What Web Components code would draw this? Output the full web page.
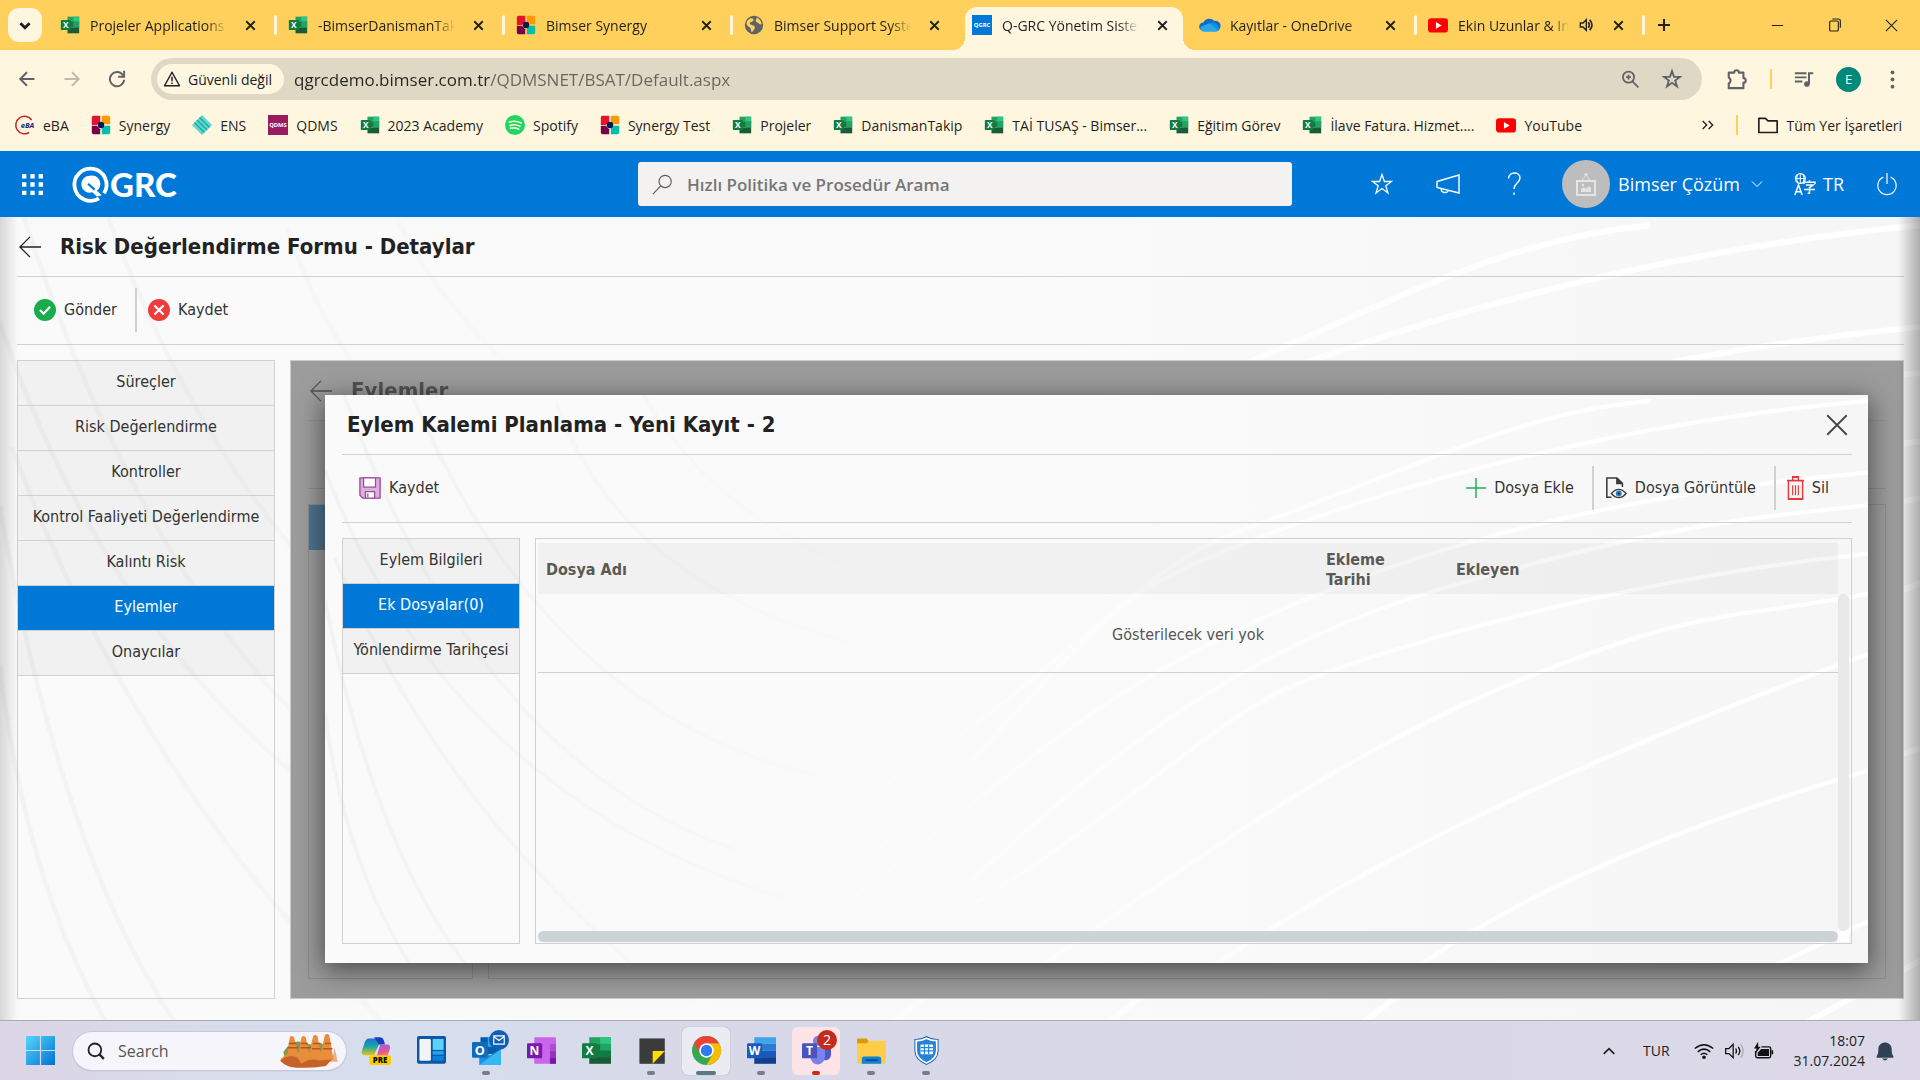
<!DOCTYPE html>
<html lang="tr">
<head>
<meta charset="utf-8">
<title>Q-GRC Yönetim Sistemi</title>
<style>
  html, body { margin: 0; height: 100%; }
  body {
    --ui: "Open Sans", "Noto Sans", sans-serif;
    --app: "DejaVu Sans Condensed", "DejaVu Sans", sans-serif;
    --line: #d0d0d0;
    --blue: #0078d7;
    --swirl: url("data:image/svg+xml,%3Csvg xmlns='http://www.w3.org/2000/svg' viewBox='0 0 1600 680' preserveAspectRatio='none'%3E%3Cdefs%3E%3ClinearGradient id='a'%3E%3Cstop offset='0' stop-color='%23fafafa'/%3E%3Cstop offset='.5' stop-color='%23fafafa'/%3E%3Cstop offset='1' stop-color='%23f6f6f6'/%3E%3C/linearGradient%3E%3ClinearGradient id='b' gradientUnits='userSpaceOnUse' x1='400' x2='1300' y1='0' y2='0'%3E%3Cstop offset='0' stop-color='%23fff' stop-opacity='0'/%3E%3Cstop offset='1' stop-color='%23fff'/%3E%3C/linearGradient%3E%3ClinearGradient id='c' gradientUnits='userSpaceOnUse' x1='0' x2='620' y1='0' y2='0'%3E%3Cstop offset='0' stop-color='%23f3f3f3'/%3E%3Cstop offset='1' stop-color='%23fafafa'/%3E%3C/linearGradient%3E%3C/defs%3E%3Crect width='1600' height='680' fill='url(%23a)'/%3E%3Cg fill='none' stroke='url(%23c)' stroke-width='4'%3E%3Cpath d='M0 245Q50 540 148 685M10 195Q110 470 317 680M0 90Q130 480 476 602M20 0Q160 440 423 543M90 0Q230 380 508 455M240 10Q330 300 740 332M0 380Q20 560 90 685M330 0Q440 220 760 270'/%3E%3C/g%3E%3Cg fill='none' stroke='url(%23b)' stroke-width='5'%3E%3Cpath d='M423 641C650 560 760 240 952 161S1240 20 1375 7M423 543C650 470 780 270 878 215S1260 40 1600 7M529 616C700 480 800 320 1132 196Q1330 120 1600 93M656 597C800 440 950 300 1164 230S1450 150 1600 132M550 685C780 560 900 400 1000 350S1350 220 1600 190M740 685C900 560 1050 430 1238 342S1450 270 1600 238M920 685Q1150 500 1600 310M1132 685Q1300 550 1600 450M1500 685L1600 630'/%3E%3C/g%3E%3C/svg%3E");
  }
</style>
</head>
<body>
<desktop-screen></desktop-screen>
<script>
const excel = `<path d="M9 2h14v7H9z" fill="#21a366"/><path d="M16 2h7v7h-7z" fill="#33c481"/><path d="M9 8h14v7H9z" fill="#107c41"/><path d="M16 8h7v7h-7z" fill="#21a366"/><path d="M9 15h14v7H9z" fill="#185c37"/><rect x="1" y="6" width="12" height="12" rx="1" fill="#107c41"/><text x="7" y="15.5" font-size="10" font-weight="700" fill="#fff" text-anchor="middle" font-family="Open Sans">X</text>`;
const synergy = `<path d="M1 3a2 2 0 0 1 2-2h8v7l-4 4H1z" fill="#e6122b"/><path d="M13 1h8a2 2 0 0 1 2 2v8h-6l-4-3z" fill="#f90"/><path d="M1 13h6l4 4v6H3a2 2 0 0 1-2-2z" fill="#780046"/><path d="M13 16l4-3h6v8a2 2 0 0 1-2 2h-8z" fill="#00bfa8"/><circle cx="12" cy="12" r="4" fill="#0a1850"/>`;
const star = `<path d="M12 2.500l2.400 7h7.100l-5.700 4.300 2.200 7.200-6-4.400-6 4.400 2.200-7.200L2.500 9.500h7.100z" fill="none" stroke="currentColor"`;
const ICONS = {
  excel, synergy,
  down: `<path d="M7 10l5 5 5-5" fill="none" stroke="currentColor" stroke-width="3"/>`,
  x: `<path d="M6 6l12 12M18 6L6 18" stroke="currentColor" stroke-width="2.600"/>`,
  plus: `<path d="M12 3v18M3 12h18" stroke="currentColor" stroke-width="3"/>`,
  globe: `<circle cx="12" cy="12" r="11" fill="#5f6368"/><path d="M8 4c3 0 4 1 3 3s-4 1-4 3 3 2 5 3 1 4-1 6-1 2-2 1 0-4-2-5-4-3-4-5 2-5 5-6zM15 3c3 1 6 4 6 8-2 1-3-1-5-2s-3-3-1-4z" fill="#ffd15c"/>`,
  grc: `<path d="M0 0h24v24H0z" fill="#0078d7"/><text x="12" y="14.500" font-size="7" font-weight="700" fill="#fff" text-anchor="middle" font-family="Open Sans">QGRC</text>`,
  cloud: `<path d="M4 19a5 5 0 0 1 0-10 8 8 0 0 1 13-2 6 6 0 0 1 3 12z" fill="#0f6cc9"/><path d="M4 20a4 4 0 0 1-3-6l10-4 12 6a4 4 0 0 1-3 4z" fill="#28a8ea"/><path d="M12 10a6 6 0 0 1 9 3c3 2 3 5 1 6z" fill="#1490df"/>`,
  yt: `<rect y="4" width="24" height="17" rx="4" fill="#f00"/><path d="M9.500 8.500v8l7-4z" fill="#fff"/>`,
  sound: `<path d="M2 9h4l5-5v16l-5-5H2z" fill="none" stroke="currentColor" stroke-width="2"/><path d="M14 8q3 4 0 8M16 4q7 8 0 16" fill="none" stroke="currentColor" stroke-width="2.400"/>`,
  min: `<path d="M4 12h16" stroke="currentColor" stroke-width="1.500"/>`,
  restore: `<path d="M4 8a2 2 0 0 1 2-2h9a2 2 0 0 1 2 2v11a2 2 0 0 1-2 2H6a2 2 0 0 1-2-2zM8 3h9a3 3 0 0 1 3 3v10" fill="none" stroke="currentColor" stroke-width="1.700"/>`,
  xthin: `<path d="M3 3l18 18M21 3L3 21" stroke="currentColor" stroke-width="1.700"/>`,
  back: `<path d="M22 12H3M12 3l-9 9 9 9" fill="none" stroke="currentColor" stroke-width="2.600"/>`,
  fwd: `<path d="M2 12h19M12 3l9 9-9 9" fill="none" stroke="currentColor" stroke-width="2.600"/>`,
  reload: `<path d="M20 7a9.500 9.500 0 1 0 1.500 6M21.500 1v8h-8" fill="none" stroke="currentColor" stroke-width="2.600"/>`,
  warn: `<path d="M12 3L2 21h20z" fill="none" stroke="currentColor" stroke-width="2" stroke-linejoin="round"/><path d="M12 9v6M12 16.500v2" stroke="currentColor" stroke-width="2"/>`,
  zoomin: `<circle cx="9.500" cy="9" r="7" fill="none" stroke="currentColor" stroke-width="2.200"/><path d="M9.500 6v6M6.500 9h6M14 14l8 8" stroke="currentColor" stroke-width="2.200"/>`,
  star: star + ` stroke-width="2.200"/>`,
  starthin: star + ` stroke-width="1.300"/>`,
  puzzle: `<path d="M3 5h6a2.500 2.500 0 0 1 5 0h5v6a2.500 2.500 0 0 1 0 5v6H3v-5q4-3 0-7z" fill="none" stroke="currentColor" stroke-width="2.300" stroke-linejoin="round"/>`,
  media: `<path d="M1 5h14M1 10h14M1 15h9" stroke="currentColor" stroke-width="2.300"/><path d="M18 18V5h5" fill="none" stroke="currentColor" stroke-width="2.400"/><circle cx="15.500" cy="18" r="3.400" fill="currentColor"/>`,
  dots: `<circle cx="12" cy="3" r="2.400" fill="currentColor"/><circle cx="12" cy="12" r="2.400" fill="currentColor"/><circle cx="12" cy="21" r="2.400" fill="currentColor"/>`,
  eba: `<path d="M20 6A10.500 10.500 0 1 0 17 21" fill="none" stroke="#c8202a" stroke-width="1.800"/><text x="15" y="15.500" font-size="9" font-weight="700" font-style="italic" fill="#1c2a78" text-anchor="middle" font-family="Open Sans">eBA</text>`,
  ens: `<path d="M12 0l12 12-12 12L0 12z" fill="#5fd6cf"/><path d="M9 3l12 12M6 6l12 12M3 9l12 12M12 6l9 9M6 12l9 9" stroke="#17a79d" stroke-width="1.400"/>`,
  qdms: `<path d="M0 0h24v24H0z" fill="#9b1b5f"/><text x="12" y="14.500" font-size="7" font-weight="700" fill="#fff" text-anchor="middle" font-family="Open Sans">QDMS</text>`,
  spotify: `<circle cx="12" cy="12" r="12" fill="#1ed760"/><path d="M5 8.500q8-2.500 14.500 1M6 12.500q6-2 12 1M6.500 16q5-1.500 10 1" fill="none" stroke="#fff6df" stroke-width="2" stroke-linecap="round"/>`,
  more: `<path d="M4 6l6 6-6 6M13 6l6 6-6 6" fill="none" stroke="currentColor" stroke-width="2"/>`,
  folder: `<path d="M1 4h8l3 3h11v14H1z" fill="none" stroke="currentColor" stroke-width="2" stroke-linejoin="round"/>`,
  waffle: `<path d="M0 0h5v5H0zM9.500 0h5v5h-5zM19 0h5v5h-5zM0 9.500h5v5H0zM9.500 9.500h5v5h-5zM19 9.500h5v5h-5zM0 19h5v5H0zM9.500 19h5v5h-5zM19 19h5v5h-5z" fill="#fff"/>`,
  qlogo: `<path d="M18.500 21.500A11 11 0 1 1 22 18" fill="none" stroke="#fff" stroke-width="2.600"/><path d="M12 6a5.800 5.800 0 1 0 2 11.300l3 3 3.500-1-3.500-3A5.800 5.800 0 0 0 12 6z" fill="#fff"/><path d="M11 11.500l4.500 4" stroke="#0078d7" stroke-width="1.500"/>`,
  lens: `<circle cx="15" cy="8.500" r="7" fill="none" stroke="currentColor" stroke-width="1.300"/><path d="M10 13.500L1 23" stroke="currentColor" stroke-width="1.300"/>`,
  horn: `<path d="M1 9.500L23 3v18L1 15.500zM5 16.500c0 5 7 5 7 2" fill="none" stroke="currentColor" stroke-width="1.400"/>`,
  help: `<path d="M6.500 6.500C7-1 18-.5 18 6c0 5-6 5-6 11M12 20.500v2.500" fill="none" stroke="currentColor" stroke-width="1.400"/>`,
  picture: `<path d="M3 9h18v14H3z" fill="none" stroke="#e4e4e4" stroke-width="2"/><path d="M8 8l4-5 4 5" fill="none" stroke="#e4e4e4" stroke-width="1"/><circle cx="12" cy="2.500" r="1.600" fill="#e4e4e4"/><path d="M7 20v-3l3-2 2 2 3-3 2 2v4z" fill="#e4e4e4"/><circle cx="9" cy="13" r="1.300" fill="#e4e4e4"/>`,
  chev: `<path d="M2 7l10 10L22 7" fill="none" stroke="currentColor" stroke-width="2"/>`,
  chevup: `<path d="M3 17l9-9 9 9" fill="none" stroke="currentColor" stroke-width="3"/>`,
  lang: `<circle cx="8" cy="6" r="5.400" fill="none" stroke="#fff" stroke-width="1.300"/><path d="M2.500 6h11M8 .5v11M5 1.500q-2 4.500 0 9M11 1.500q2 4.500 0 9" fill="none" stroke="#fff"/><path d="M2 24l4-11 4 11M3.500 20.500h5M12 12v-2h12v2M18 8v2M14 13h8l-4 3v6h-2M12 18h12" fill="none" stroke="#fff" stroke-width="1.600"/>`,
  power: `<path d="M8 4.500a10 10 0 1 0 8 0M12 0v12" fill="none" stroke="currentColor" stroke-width="1.300"/>`,
  arrow: `<path d="M24 12H1M12 1L1 12l11 11" fill="none" stroke="currentColor" stroke-width="1.400"/>`,
  ok: `<circle cx="12" cy="12" r="12" fill="#1bab4f"/><path d="M6.500 12l4 4 7-7.500" fill="none" stroke="#fff" stroke-width="2.300"/>`,
  no: `<circle cx="12" cy="12" r="12" fill="#ee3b3b"/><path d="M7 7l10 10M17 7L7 17" stroke="#fff" stroke-width="2.300"/>`,
  save: `<path d="M1 1h22v22H4l-3-3z" fill="#d9b3d9" stroke="#a349a4" stroke-width="1.500"/><path d="M5 1h13v10H5z" fill="#fff" stroke="#a349a4" stroke-width="1.400"/><path d="M7 16h10v7H7z" fill="#fff" stroke="#a349a4" stroke-width="1.400"/><path d="M8.500 18h2v4h-2z" fill="#888"/>`,
  add: `<path d="M12 0v24M0 12h24" stroke="#1bb35a" stroke-width="1.800"/>`,
  docview: `<path d="M7 22H2V1h11l6 6v4M13 1v6h6" fill="none" stroke="#3a3a3a" stroke-width="1.700"/><path d="M13 1l6 6h-6z" fill="#3a3a3a"/><path d="M7 18q8-9 16 0-8 9-16 0z" fill="#f8f8f8" stroke="#3a3a3a" stroke-width="1.500"/><circle cx="15" cy="18" r="3.200" fill="#2d7dc4"/><circle cx="15" cy="18" r="1.200" fill="#123"/>`,
  trash: `<path d="M0 4h24M8 4V0h8v4M2 4v20h20V4" fill="none" stroke="#e8383b" stroke-width="2"/><path d="M8 9v11M12 9v11M16 9v11" stroke="#e8383b" stroke-width="1.600"/>`,
  win: `<defs><linearGradient id="w" x2="1" y2="1"><stop stop-color="#55d6fd"/><stop offset="1" stop-color="#0072d2"/></linearGradient></defs><path d="M0 0h11.500v11.500H0zM12.500 0H24v11.500H12.500zM0 12.500h11.500V24H0zM12.500 12.500H24V24H12.500z" fill="url(#w)"/>`,
  search: `<circle cx="10.500" cy="10.500" r="8.500" fill="none" stroke="#222" stroke-width="2.400"/><path d="M16.500 16.500l6 6" stroke="#222" stroke-width="3"/>`,
  copilot: `<defs><linearGradient id="c1" y2="1" x2="0"><stop stop-color="#1a72d8"/><stop offset=".5" stop-color="#1fa7a0"/><stop offset="1" stop-color="#e8c41a"/></linearGradient><linearGradient id="c2" y2="1" x2=".3"><stop stop-color="#9b5bff"/><stop offset=".6" stop-color="#e0559a"/><stop offset="1" stop-color="#ff8a5c"/></linearGradient></defs><path d="M6 2h8l3 5-3 0-4 9H2q-3 0-2-4l2-6q1-4 4-4z" fill="url(#c1)"/><path d="M10 1h5q3 0 4 6h-5z" fill="#1740b8"/><path d="M15 7h6q3 0 2 4l-2 6q-1 2-3 2h-8q2-1 3-5z" fill="url(#c2)"/><rect x="6" y="16" width="18" height="8" rx="1.500" fill="#fc0"/><text x="15" y="22.500" font-size="6.500" font-weight="800" fill="#111" text-anchor="middle" font-family="Open Sans">PRE</text>`,
  widgets: `<rect width="24" height="23" rx="1.500" fill="#0b57a4"/><rect x="2" y="2.500" width="9.500" height="18" rx="1" fill="#f4f4f4"/><path d="M13 2.500h9v9h-9z" fill="#5fd2fb"/><path d="M13 12.500h9v3h-9z" fill="#1ea5f5"/><path d="M13 16.500h9v4h-9z" fill="#0c80dd"/>`,
  outlook: `<path d="M7 1h16v14H7z" fill="#0a5ca8"/><path d="M13 1h10v8H13z" fill="#28a8ea"/><path d="M6 11l9 5 9-5v13H6z" fill="#1b8fe0"/><path d="M6 24l18-13v13z" fill="#35b8f1"/><rect y="5" width="13" height="13" rx="1" fill="#0f6cbd"/><text x="6.500" y="15.500" font-size="10.500" font-weight="700" fill="#fff" text-anchor="middle" font-family="Open Sans">O</text>`,
  onenote: `<rect x="6" y="1" width="18" height="22" rx="1" fill="#ca64ea"/><path d="M19 6.500h5v6h-5z" fill="#ae4bd5"/><path d="M19 12.500h5V18h-5z" fill="#9332bf"/><path d="M19 18h5v5h-5z" fill="#7719aa"/><rect y="6" width="12.500" height="12.500" rx="1" fill="#7719aa"/><text x="6.200" y="16" font-size="10" font-weight="700" fill="#fff" text-anchor="middle" font-family="Open Sans">N</text>`,
  xl: `<path d="M6 1h18v8H6z" fill="#21a366"/><path d="M15 1h9v6h-9z" fill="#33c481"/><path d="M6 7h18v11H6z" fill="#107c41"/><path d="M15 6.500h9V12h-9z" fill="#21a366"/><path d="M6 17.500h18V23H6z" fill="#185c37"/><rect y="6" width="12.500" height="12.500" rx="1" fill="#107c41"/><text x="6.200" y="16" font-size="10" font-weight="700" fill="#fff" text-anchor="middle" font-family="Open Sans">X</text>`,
  notes: `<path d="M2 2h21v21H2z" fill="#3b3b3b"/><path d="M13 23V12.500h10z" fill="#fd0"/>`,
  chrome: `<circle cx="12" cy="12" r="12" fill="#34a853"/><path d="M12 6h10.400A12 12 0 0 1 12 24l5.200-9z" fill="#fbbc04"/><path d="M1.600 6l5.200 9L12 6h10.400A12 12 0 0 0 1.600 6z" fill="#ea4335"/><circle cx="12" cy="12" r="6" fill="#fff"/><circle cx="12" cy="12" r="4.700" fill="#2f7bf0"/>`,
  word: `<path d="M6 1h18v5.500H6z" fill="#41a5ee"/><path d="M6 6.500h18V12H6z" fill="#2b7cd3"/><path d="M6 12h18v5.500H6z" fill="#185abd"/><path d="M6 17.500h18V23H6z" fill="#103f91"/><rect y="6" width="12.500" height="12.500" rx="1" fill="#185abd"/><text x="6.200" y="16" font-size="10" font-weight="700" fill="#fff" text-anchor="middle" font-family="Open Sans">W</text>`,
  teams: `<circle cx="20" cy="6" r="3" fill="#5059c9"/><circle cx="13" cy="4" r="4" fill="#7b83eb"/><path d="M15 9h9v7a5 5 0 0 1-9 2z" fill="#5059c9"/><path d="M7 9h12v8a6 6 0 0 1-12 1z" fill="#7b83eb"/><rect y="6" width="12.500" height="12.500" rx="1" fill="#4b53bc"/><text x="6.200" y="16" font-size="10" font-weight="700" fill="#fff" text-anchor="middle" font-family="Open Sans">T</text>`,
  explorer: `<path d="M0 3q0-1 1-1h7l2 3v4H0z" fill="#dc9a00"/><path d="M0 6l8 0 2-2h13q1 0 1 1v17q0 1-1 1H1q-1 0-1-1z" fill="#ffcd48"/><path d="M4 23v-4q0-2 2-2h12q2 0 2 2v4z" fill="#1180d6"/><path d="M7 20h10" stroke="#0b3f7c" stroke-width="1.200"/>`,
  shield: `<path d="M12 0q5 3 10 2.500V12q0 8-10 12Q2 20 2 12V2.500Q7 3 12 0z" fill="#1560ad"/><path d="M12 1.800q4.500 2.200 8.500 2V12q0 7-8.500 10.300Q3.500 19 3.500 12V3.800q4 .2 8.500-2z" fill="#2383d8" stroke="#fff" stroke-width="1.400"/><rect x="7" y="7" width="10.500" height="8" rx="1" fill="#fff"/><path d="M7 9.600h10.500M7 12.300h10.500M10.300 7v8M13.800 7v8" stroke="#2383d8"/>`,
  mail: `<path d="M3 5h18v14H3zM3 6l9 7 9-7" fill="none" stroke="#fff" stroke-width="2"/>`,
  wifi: `<path d="M1 9q11-9 22 0M4.500 13q7.500-6.500 15 0M8 16.500q4-3.500 8 0" fill="none" stroke="#111" stroke-width="1.800"/><circle cx="12" cy="19.500" r="2.200" fill="#111"/>`,
  vol: `<path d="M2 9h4l5-5v16l-5-5H2z" fill="none" stroke="#111" stroke-width="1.500"/><path d="M14 9q2 3 0 6M17 7q4 5 0 10" fill="none" stroke="#111" stroke-width="1.600"/><path d="M20 4q6 8 0 16" fill="none" stroke="#aaa" stroke-width="1.500"/>`,
  batt: `<path d="M2 12v6q0 2 2 2h14q2 0 2-2V9q0-2-2-2H9" fill="none" stroke="#111" stroke-width="1.700"/><path d="M4.500 18V14l4-4.500h9.500V18z" fill="#111"/><path d="M21 11h2v5h-2zM5 1L0 9h3l-1 6 6-8H5z" fill="#111"/>`,
  bell: `<path d="M2 18q2-2 2-8c0-11 16-11 16 0q0 6 2 8v2H2z" fill="#2f4154"/><path d="M8.500 21h7q-3.500 5-7 0z" fill="#2f4154"/>`,
  babas: `<path d="M3 16q8-13 18-9t16 0q8 3 12 12l-3 6H5z" fill="#7d9a4e"/><path d="M42 25l1-14h3l1 12h2l2-11 3 13z" fill="#dcae93"/><path d="M0 23l7-6 2-15q2-2 4 0l4 16 3-16q2-2 4 0l3 15 4-16q2-2 4 0l3 16 4-17q2-2 4 0l4 23-8 5q-20 3-31 1-9-1-10-6z" fill="#ea8d3a"/><path d="M0 24q8-6 16-3l4 6q8-6 16-3l12-1-5 6q-20 3-33 1-7-2-10-6z" fill="#c4622a"/><path d="M8 8h7M7 12h10M20 8h6M19 12h10M31 8h6M30 13h8M42 8h6M40 13h9" stroke="#b5561f" stroke-width="1.400"/>`
};
const define = (tag, css, html) => customElements.define(tag, class extends HTMLElement {
  connectedCallback() {
    if (this.shadowRoot) return;
    const root = this.attachShadow({ mode: 'open' });
    const t = document.createElement('template');
    t.innerHTML = `<style>*{box-sizing:border-box}button,input{font:inherit;color:inherit;border:0;background:none;padding:0;margin:0}${css}</style>` +
      (typeof html === 'function' ? html(this) : html);
    root.append(t.content.cloneNode(true));
  }
});
const ic = (n, s = 20, h = s) => `<x-icon name="${n}" style="width:${s}px;height:${h}px"></x-icon>`;

define('x-icon', `:host{display:block;flex:none}svg{display:block;width:100%;height:100%;overflow:visible}`,
  el => {
    const n = el.getAttribute('name');
    return `<svg viewBox="${n === 'babas' ? '0 0 56 30' : '0 0 24 24'}"${n === 'trash' ? ' preserveAspectRatio="none"' : ''} aria-hidden="true">${ICONS[n]}</svg>`;
  });

/* ---------- browser window ---------- */
define('browser-tab', `
  :host{display:flex;width:228px;height:43px;align-items:center;position:relative;padding:0 12px 7px;gap:10px}
  :host([active]){background:#fff6df;border-radius:12px 12px 0 0;width:218px;margin:0 5px;padding:0 7px 7px}
  :host([active])::before{content:"";position:absolute;bottom:0;left:-12px;right:-12px;height:12px;background:radial-gradient(circle at 0 0,transparent 12px,#fff6df 12px) left/12px 12px no-repeat,radial-gradient(circle at 100% 0,transparent 12px,#fff6df 12px) right/12px 12px no-repeat}
  .t{flex:1;min-width:0;overflow:hidden;white-space:nowrap;-webkit-mask-image:linear-gradient(90deg,#000 85%,transparent);mask-image:linear-gradient(90deg,#000 85%,transparent)}
  button{flex:none;padding:3px 5px}
  :host([sep])::after{content:"";width:3px;height:20px;border-radius:2px;background:#fff6df;position:absolute;right:-1px;top:8px}`,
  el => `${ic(el.getAttribute('icon'))}<span class="t"><slot></slot></span>${el.hasAttribute('audio') ? ic('sound', 16) : ''}<button aria-label="Kapat">${ic('x', 17)}</button>`);

define('tab-strip', `
  :host{display:flex;height:50px;background:#ffd15c;align-items:flex-end;padding-left:8px;font:14px var(--ui);color:#1f1f1f}
  .menu{width:34px;height:34px;border-radius:11px;background:#fff6df;margin:0 6px 8px 0;padding:6px}
  .new{padding:0 12px 17px}
  .win{margin-left:auto;display:flex}
  .win button{width:57px;height:50px;display:flex;align-items:center;justify-content:center}`,
  `<button class="menu" aria-label="Sekmelerde ara">${ic('down', 22)}</button>
  <browser-tab icon="excel" sep>Projeler Applications</browser-tab>
  <browser-tab icon="excel" sep>-BimserDanismanTaki</browser-tab>
  <browser-tab icon="synergy" sep>Bimser Synergy</browser-tab>
  <browser-tab icon="globe">Bimser Support Syste</browser-tab>
  <browser-tab icon="grc" active>Q-GRC Yönetim Siste</browser-tab>
  <browser-tab icon="cloud" sep>Kayıtlar - OneDrive</browser-tab>
  <browser-tab icon="yt" audio sep>Ekin Uzunlar &amp; In</browser-tab>
  <button class="new" aria-label="Yeni sekme">${ic('plus', 16)}</button>
  <div class="win"><button aria-label="Simge durumu">${ic('min', 17)}</button><button aria-label="Geri yükle">${ic('restore', 16)}</button><button aria-label="Kapat">${ic('xthin', 15)}</button></div>`);

define('address-bar', `
  :host{display:flex;align-items:center;padding:8px 18px 7px 18px;background:#fff6df;color:#5f6368;font:17px var(--ui);gap:24px}
  .nav{display:flex;gap:26px}
  .nav button{width:19px}
  .dim{opacity:.4}
  .box{flex:1;height:42px;border-radius:21px;background:#dfd8c4;display:flex;align-items:center;padding:0 20px 0 6px;gap:10px}
  .chip{display:flex;align-items:center;gap:7px;height:30px;border-radius:15px;background:#fff6df;color:#202124;font-size:14px;padding:0 12px 0 6px}
  input{flex:1;outline:0;height:36px;-webkit-text-fill-color:transparent;background:linear-gradient(90deg,#26251f 196px,#68655c 196px);-webkit-background-clip:text;background-clip:text}
  .in{display:flex;gap:22px}
  .r{display:flex;align-items:center;gap:22px}
  .r i{width:2px;height:20px;background:#ffd15c}
  .av{width:25px;height:25px;border-radius:50%;background:#00897b;color:#fff;font-size:13px;line-height:25px;text-align:center}`,
  `<div class="nav"><button aria-label="Geri">${ic('back', 18)}</button><button class="dim" aria-label="İleri">${ic('fwd', 18)}</button><button aria-label="Yenile">${ic('reload', 18)}</button></div>
  <div class="box"><button class="chip">${ic('warn', 18)}Güvenli değil</button><input aria-label="Adres" value="qgrcdemo.bimser.com.tr/QDMSNET/BSAT/Default.aspx"><div class="in"><button aria-label="Yakınlaştır">${ic('zoomin', 19)}</button><button aria-label="Yer işareti">${ic('star', 20)}</button></div></div>
  <div class="r"><button aria-label="Uzantılar">${ic('puzzle', 22)}</button><i></i><button aria-label="Medya">${ic('media', 20)}</button><button class="av" aria-label="Profil">E</button><button aria-label="Menü">${ic('dots', 19)}</button></div>`);

define('book-mark', `:host{display:block;flex:none}a{display:flex;align-items:center;gap:8px;color:inherit;text-decoration:none;white-space:nowrap}`,
  el => `<a href="#">${ic(el.getAttribute('icon'))}<slot></slot></a>`);
define('bookmark-bar', `
  :host{display:flex;align-items:center;height:44px;padding:0 18px 8px 15px;box-sizing:border-box;background:#fff6df;color:#1f1f1f;font:14px var(--ui);gap:22px}
  .e{margin-left:auto;display:flex;align-items:center;gap:20px}
  .e i{width:2px;height:20px;background:#ffd15c}`,
  [['eba','eBA'],['synergy','Synergy'],['ens','ENS'],['qdms','QDMS'],['excel','2023 Academy'],['spotify','Spotify'],['synergy','Synergy Test'],['excel','Projeler'],['excel','DanismanTakip'],['excel','TAİ TUSAŞ - Bimser...'],['excel','Eğitim Görev'],['excel','İlave Fatura. Hizmet....'],['yt','YouTube']]
    .map(b => `<book-mark icon="${b[0]}">${b[1]}</book-mark>`).join('') +
  `<div class="e"><button aria-label="Diğer">${ic('more', 16)}</button><i></i><book-mark icon="folder">Tüm Yer İşaretleri</book-mark></div>`);

/* ---------- application ---------- */
define('app-header', `
  :host{display:grid;grid-template-columns:1fr 654px 1fr;align-items:center;height:66px;background:var(--blue);color:#fff;font:18px var(--ui);padding-left:10px}
  .l,.r,.u,.g,.s{display:flex;align-items:center}
  .l{padding-left:12px;gap:29px}
  .logo{display:flex;align-items:center;gap:3px;font:900 33px Lato,sans-serif}
  .s{height:44px;background:#f3f2f1;border-radius:3px;color:#605e5c;padding:0 14px;gap:14px}
  input{flex:1;outline:0;font:600 17px var(--ui)}
  input::placeholder{color:#767676;opacity:1}
  .r{justify-content:flex-end;padding-right:22px;gap:30px}
  .av{width:48px;height:48px;border-radius:50%;background:#bdbdbd;display:flex;align-items:center;justify-content:center}
  .u{gap:8px}.g{gap:8px}
  .n{margin-right:3px}
  .pair{display:flex;gap:42px;align-items:center;margin-right:6px}
  .last{display:flex;gap:32px;align-items:center}`,
  `<div class="l"><button aria-label="Uygulamalar">${ic('waffle', 21)}</button><div class="logo">${ic('qlogo', 35)}<span>GRC</span></div></div>
  <label class="s">${ic('lens', 21)}<input placeholder="Hızlı Politika ve Prosedür Arama" aria-label="Arama"></label>
  <div class="r"><div class="pair"><button aria-label="Favoriler">${ic('starthin', 24)}</button><button aria-label="Duyurular">${ic('horn', 24)}</button><button aria-label="Yardım">${ic('help', 24)}</button></div>
  <button class="u"><span class="av">${ic('picture', 24)}</span><span class="n">Bimser Çözüm</span>${ic('chev', 12)}</button>
  <div class="last"><button class="g">${ic('lang', 22)}TR</button><button aria-label="Çıkış">${ic('power', 22)}</button></div></div>`);

define('page-title', `
  :host{display:flex;align-items:center;height:60px;box-sizing:border-box;border-bottom:1px solid var(--line);gap:19px;padding-left:2px;color:#222}
  h1{margin:0;font:700 22px var(--app);flex:1}`,
  el => `${el.hasAttribute('back') ? `<button aria-label="Geri">${ic('arrow', 22)}</button>` : ''}<h1><slot></slot></h1><slot name="end"></slot>`);

define('tool-button', `
  :host{display:block}
  :host([sep]){border-left:2px solid #d0d0d0;padding-left:11px}
  button{display:flex;align-items:center;gap:8px;height:44px;font:16px var(--app);color:#333;white-space:nowrap}`,
  el => `<button>${ic(el.getAttribute('icon'), +el.getAttribute('w') || 22, 22)}<slot></slot></button>`);

define('tool-row', `
  :host{display:flex;align-items:center;height:68px;box-sizing:border-box;border-bottom:1px solid var(--line);padding:0 23px 2px 17px;gap:18px}
  ::slotted([push]){margin-left:auto}`, `<slot></slot>`);

define('nav-item', `
  :host{display:block}
  button{display:block;width:100%;height:45px;border-bottom:1px solid var(--line);background:rgba(0,0,0,.035);white-space:nowrap;padding-bottom:3px}
  :host([on]) button{background:var(--blue);color:#fff}`, `<button><slot></slot></button>`);
define('side-nav', `:host{display:block;border:1px solid var(--line);font:16px var(--app);color:#333;box-sizing:border-box}`, `<slot></slot>`);

define('file-grid', `
  :host{display:flex;flex-direction:column;border:1px solid var(--line);padding:4px 2px 1px;font:16px var(--app);color:#555;box-sizing:border-box}
  .m{flex:1;display:flex}
  .c{flex:1}
  table{width:100%;border-collapse:collapse;table-layout:fixed}
  th{background:rgba(0,0,0,.035);height:51px;text-align:left;font-weight:700;line-height:20px;padding:2px 55px 0 8px;color:#5a5a55}
  th:first-child,th:last-child{padding-right:8px}
  td{height:78px;text-align:center;border-bottom:1px solid var(--line);padding:4px 0 0}
  .v{width:11px;margin-top:51px;background:#e8e8e8;border-radius:5px}
  .h{display:flex;height:11px}
  .h b{flex:1;border-radius:6px;background:#cbd3d6}
  .h i{width:11px;background:#fff}`,
  `<div class="m"><div class="c"><table><colgroup><col style="width:60%"><col style="width:10%"><col></colgroup><thead><tr><th>Dosya Adı</th><th>Ekleme Tarihi</th><th>Ekleyen</th></tr></thead><tbody><tr><td colspan="3">Gösterilecek veri yok</td></tr></tbody></table></div><div class="v"></div></div>
  <div class="h"><b></b><i></i></div>`);

define('plan-dialog', `
  :host{display:flex;flex-direction:column;background:var(--swirl) center/100% 100%;box-shadow:0 6px 24px 2px rgba(0,0,0,.5);padding:0 16px 19px 17px;box-sizing:border-box}
  page-title{padding:0 2px 0 5px}
  .b{flex:1;display:flex;gap:15px;padding-top:15px}
  side-nav{width:178px}
  file-grid{flex:1}
  .x{color:#444}`,
  `<page-title>Eylem Kalemi Planlama - Yeni Kayıt - 2<button slot="end" class="x" aria-label="Kapat">${ic('xthin', 26)}</button></page-title>
  <tool-row><tool-button icon="save">Kaydet</tool-button><tool-button push icon="add" w="20">Dosya Ekle</tool-button><tool-button sep icon="docview" w="22">Dosya Görüntüle</tool-button><tool-button sep icon="trash" w="17">Sil</tool-button></tool-row>
  <div class="b"><side-nav><nav-item>Eylem Bilgileri</nav-item><nav-item on>Ek Dosyalar(0)</nav-item><nav-item>Yönlendirme Tarihçesi</nav-item></side-nav><file-grid></file-grid></div>`);

define('action-panel', `
  :host{display:block;position:relative;border:1px solid #ccc;background:#9c9c9c;--line:#8c8c8c;box-sizing:border-box}
  .u{height:100%;display:flex;flex-direction:column;padding:0 17px 19px}
  .u page-title{opacity:.6}
  .f{height:68px;border-bottom:1px solid var(--line)}
  .b{flex:1;display:flex;gap:15px;padding-top:15px}
  .n,.c{border:1px solid var(--line)}
  .n{width:165px}.c{flex:1}
  .n b{display:block;height:45px;background:#4f7491}
  plan-dialog{position:absolute;inset:34px 35px 35px 34px;--line:#d0d0d0}`,
  `<div class="u"><page-title back>Eylemler</page-title><div class="f"></div><div class="b"><div class="n"><b></b></div><div class="c"></div></div></div><plan-dialog></plan-dialog>`);

define('risk-page', `
  :host{display:flex;flex-direction:column;position:relative;background:var(--swirl) center/100% 100%;padding:0 16px 21px 17px;box-sizing:border-box}
  :host::before,:host::after{content:"";position:absolute;top:0;bottom:0;width:18px;left:0;background:linear-gradient(90deg,rgba(0,0,0,.14),transparent)}
  :host::after{left:auto;right:0;width:22px;background:linear-gradient(270deg,rgba(0,0,0,.3),transparent)}
  .b{flex:1;display:flex;gap:15px;padding-top:15px}
  side-nav{width:258px}
  action-panel{flex:1}`,
  `<page-title back>Risk Değerlendirme Formu - Detaylar</page-title>
  <tool-row><tool-button icon="ok">Gönder</tool-button><tool-button sep icon="no">Kaydet</tool-button></tool-row>
  <div class="b"><side-nav><nav-item>Süreçler</nav-item><nav-item>Risk Değerlendirme</nav-item><nav-item>Kontroller</nav-item><nav-item>Kontrol Faaliyeti Değerlendirme</nav-item><nav-item>Kalıntı Risk</nav-item><nav-item on>Eylemler</nav-item><nav-item>Onaycılar</nav-item></side-nav><action-panel></action-panel></div>`);

/* ---------- taskbar ---------- */
define('task-app', `
  :host{display:block;position:relative}
  button{width:48px;height:48px;border-radius:6px;display:flex;align-items:center;justify-content:center;position:relative}
  :host([active]) button{background:#ebecf3;box-shadow:0 0 1px #889}
  :host([alert]) button{background:#fde5e7}
  button::after{content:"";position:absolute;bottom:0;width:8px;height:4px;border-radius:2px;background:transparent}
  :host([run]) button::after{background:#7b7d84}
  :host([active]) button::after{width:20px;background:#5c7788}
  :host([alert]) button::after{background:#c42b1c}
  .bd{position:absolute;right:1px;top:3px;width:20px;height:20px;border-radius:50%;background:#0f5fb5;color:#fff;display:flex;align-items:center;justify-content:center;font:14px var(--ui)}
  :host([alert]) .bd{background:#c42b1c;right:3px}`,
  el => { const b = el.getAttribute('badge'); return `<button aria-label="${el.getAttribute('icon')}">${ic(el.getAttribute('icon'), 29)}${b ? `<span class="bd">${b === 'mail' ? ic('mail', 14) : b}</span>` : ''}</button>`; });

define('task-bar', `
  :host{display:flex;align-items:center;height:60px;box-sizing:border-box;border-top:1px solid #abaab8;padding:0 25px 0 16px;font:16px var(--ui);color:#222;background:linear-gradient(90deg,#dcd5e5,#d8dceb 10%,#d6deee 22%,#d7d9e8 35%,#dad8e8 70%,#dcd8e8)}
  .start{width:48px;height:48px;display:flex;align-items:center;justify-content:center;margin-right:9px}
  .q{display:flex;align-items:center;gap:13px;width:273px;height:38px;border-radius:19px;background:#f6f5fb;box-shadow:0 0 0 1px #c9c8da,0 1px 1px #99a;padding:0 4px 0 14px;margin-right:6px}
  input{flex:1;min-width:0;outline:0;font-size:16px}input::placeholder{color:#555;opacity:1}
  .a{display:flex;gap:7px}
  .t{margin-left:auto;display:flex;align-items:center;gap:10px;font-size:14px}
  .k{text-align:right;line-height:20px;margin-left:10px}
  .lang{margin:0 14px 0 17px}`,
  `<button class="start" aria-label="Başlat">${ic('win', 29)}</button>
  <label class="q">${ic('search', 18)}<input placeholder="Search" aria-label="Search">${ic('babas', 64, 32)}</label>
  <div class="a"><task-app icon="copilot"></task-app><task-app icon="widgets"></task-app><task-app icon="outlook" badge="mail" run></task-app><task-app icon="onenote"></task-app><task-app icon="xl"></task-app><task-app icon="notes" run></task-app><task-app icon="chrome" run active></task-app><task-app icon="word" run></task-app><task-app icon="teams" badge="2" run alert></task-app><task-app icon="explorer" run></task-app><task-app icon="shield" run></task-app></div>
  <div class="t"><button aria-label="Gizli simgeler">${ic('chevup', 14)}</button><button class="lang">TUR</button>${ic('wifi')}${ic('vol')}${ic('batt')}<div class="k">18:07<br>31.07.2024</div><button aria-label="Bildirimler">${ic('bell')}</button></div>`);

define('desktop-screen', `
  :host{display:flex;flex-direction:column;height:100vh;overflow:hidden}
  risk-page{flex:1;min-height:0}`,
  `<tab-strip></tab-strip><address-bar></address-bar><bookmark-bar></bookmark-bar><app-header></app-header><risk-page></risk-page><task-bar></task-bar>`);
</script>
</body>
</html>
